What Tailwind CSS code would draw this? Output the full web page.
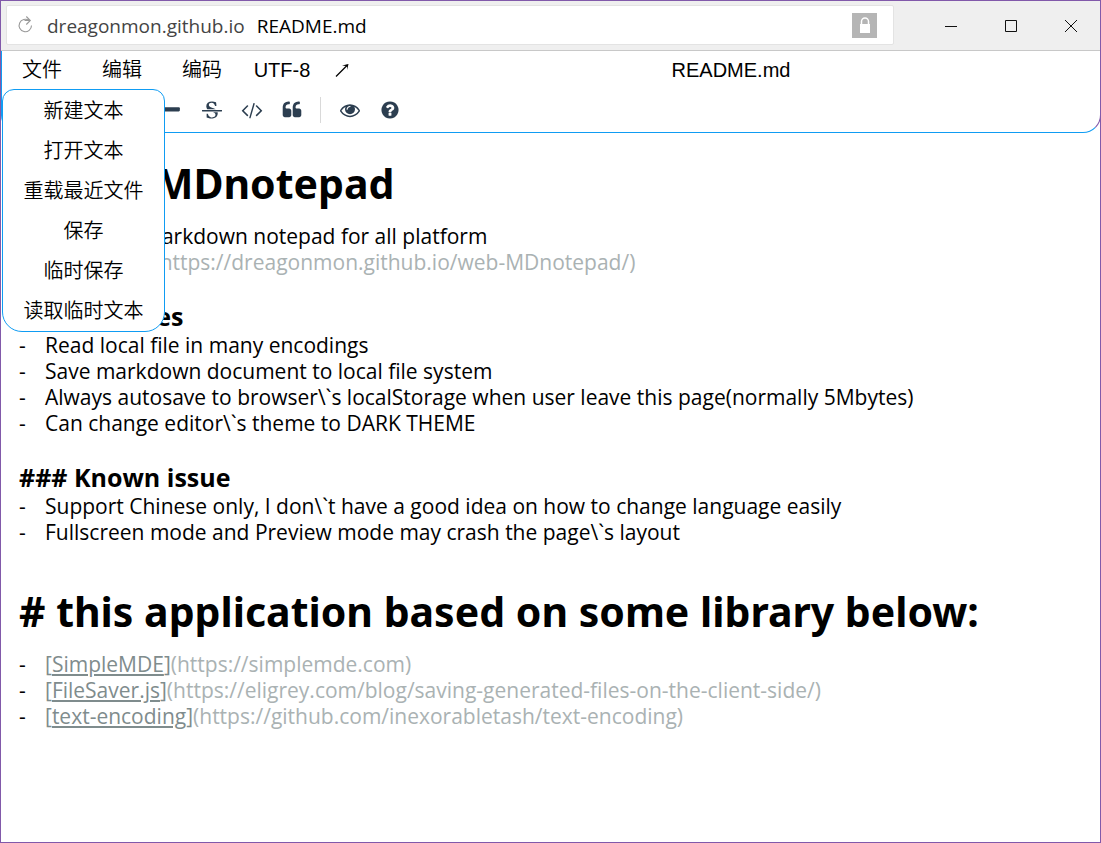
<!DOCTYPE html>
<html lang="zh-CN">
<head>
<meta charset="utf-8">
<meta name="viewport" content="width=device-width, initial-scale=1">
<title>README.md</title>
<script src="https://cdn.jsdelivr.net/npm/@tailwindcss/browser@4"></script>
</head>
<body class="flex min-h-screen flex-col border border-[#8159aa] bg-white font-['Open_Sans','Noto_Sans_CJK_SC',sans-serif] text-black">

<header class="flex h-[50px] shrink-0 items-start border-b border-[#c8c8c8] bg-[#efefef]">
  <div class="ml-[5px] mt-1 flex h-10 flex-1 items-center rounded-xs border border-[#e3e3e3] bg-white pl-2.5 pr-4">
    <button aria-label="刷新" class="mr-3">
      <svg class="block size-[18px]" viewBox="0 0 18 18" fill="none" stroke="#999" stroke-width="1.1"><path d="M14.500 9.500a6.200 6.200 0 1 1-2.500-5H7.500M9.300.5l4 4-4 4"/></svg>
    </button>
    <span class="pt-0.5 text-[19px] leading-6 text-[#444]">dreagonmon.github.io</span>
    <span class="ml-3 pt-0.5 text-[19px] leading-6">README.md</span>
    <button aria-label="安全连接" class="ml-auto flex size-[25px] items-center justify-center bg-[#b5b5b5]">
      <svg class="block h-4 w-3" viewBox="0 0 12 16"><path d="M2.500 8V4.500a3.500 3.500 0 0 1 7 0V8" fill="none" stroke="#fff" stroke-width="1.500"/><path d="M1 7h10v9H1z" fill="#fff"/></svg>
    </button>
  </div>
  <div class="-mr-px ml-[27px] flex">
    <button aria-label="最小化" class="flex h-[49px] w-[60px] items-center justify-center"><svg class="block size-3" viewBox="0 0 12 12" stroke="#111"><path d="M0 6.500h12"/></svg></button>
    <button aria-label="最大化" class="flex h-[49px] w-[60px] items-center justify-center"><svg class="block size-3" viewBox="0 0 12 12" fill="none" stroke="#111"><path d="M.5.5h11v11H.5z"/></svg></button>
    <button aria-label="关闭" class="flex h-[49px] w-[60px] items-center justify-center"><svg class="block size-3" viewBox="0 0 12 12" stroke="#111"><path d="M0 0l12 12M12 0L0 12"/></svg></button>
  </div>
</header>

<div class="relative -mr-px shrink-0 rounded-b-[18px] border-x border-b border-[#0f9cf3] border-r-[#8159aa]">
  <nav class="flex h-[39px] items-center pb-0.5 font-['Liberation_Sans','Noto_Sans_CJK_SC',sans-serif] text-[20px] leading-6">
    <button class="w-20 font-[350]" aria-expanded="true">文件</button>
    <button class="w-20 font-[350]">编辑</button>
    <button class="w-20 font-[350]">编码</button>
    <button class="w-20">UTF-8</button>
    <button class="flex w-10 justify-center" aria-label="全屏"><svg class="block size-3.5" viewBox="0 0 14 14" fill="none" stroke="#000" stroke-width="1.2"><path d="M1 13.500L12.500 2"/><path d="M7 2.500L13.500 1l-1.500 6v-3.500l-1-.5z" fill="#000" stroke="none"/></svg></button>
    <div class="flex-1 text-center">README.md</div>
  </nav>
  <div class="flex h-[42px] items-center pb-0.5 pl-[150px] text-[#2c3e50]">
    <button class="flex w-10 justify-center" aria-label="分隔线"><svg class="block size-5" viewBox="0 0 1792 1792" fill="currentColor"><path d="M1600 736v192q0 40-28 68t-68 28h-1216q-40 0-68-28t-28-68v-192q0-40 28-68t68-28h1216q40 0 68 28t28 68z"/></svg></button>
    <button class="flex w-10 justify-center" aria-label="删除线"><svg class="block size-5" viewBox="0 0 1792 1792" fill="currentColor"><path d="M1760 896q14 0 23 9t9 23v64q0 14-9 23t-23 9h-1728q-14 0-23-9t-9-23v-64q0-14 9-23t23-9h1728zm-1277-64q-28-35-51-80-48-97-48-188 0-181 134-309 133-127 393-127 50 0 167 19 66 12 177 48 10 38 21 118 14 123 14 183 0 18-5 45l-12 3-84-6-14-2q-50-149-103-205-88-91-210-91-114 0-182 59-67 58-67 146 0 73 66 140t279 129q69 20 173 66 58 28 95 52h-743zm507 256h411q7 39 7 92 0 111-41 212-23 55-71 104-37 35-109 81-80 48-153 66-80 21-203 21-114 0-195-23l-140-40q-57-16-72-28-8-8-8-22v-13q0-108-2-156-1-30 0-68l2-37v-44l102-2q15 34 30 71t22.500 56 12.500 27q35 57 80 94 43 36 105 57 59 22 132 22 64 0 139-27 77-26 122-86 47-61 47-129 0-84-81-157-34-29-137-71z"/></svg></button>
    <button class="flex w-10 justify-center" aria-label="代码"><svg class="block size-5 overflow-visible" viewBox="0 0 1792 1792" fill="currentColor"><path d="M553 1399l-50 50q-10 10-23 10t-23-10l-466-466q-10-10-10-23t10-23l466-466q10-10 23-10t23 10l50 50q10 10 10 23t-10 23l-393 393 393 393q10 10 10 23t-10 23zm591-1067l-373 1291q-4 13-15.500 19.500t-23.500 2.500l-62-17q-13-4-19.500-15.500t-2.500-24.500l373-1291q4-13 15.500-19.500t23.500-2.500l62 17q13 4 19.500 15.500t2.500 24.500zm657 651l-466 466q-10 10-23 10t-23-10l-50-50q-10-10-10-23t10-23l393-393-393-393q-10-10-10-23t10-23l50-50q10-10 23-10t23 10l466 466q10 10 10 23t-10 23z"/></svg></button>
    <button class="flex w-10 justify-center" aria-label="引用"><svg class="block size-5" viewBox="0 0 1792 1792" fill="currentColor"><path d="M832 960v384q0 80-56 136t-136 56h-384q-80 0-136-56t-56-136v-704q0-104 40.500-198.500t109.500-163.500 163.500-109.500 198.500-40.500h64q26 0 45 19t19 45v128q0 26-19 45t-45 19h-64q-106 0-181 75t-75 181v32q0 40 28 68t68 28h224q80 0 136 56t56 136zm896 0v384q0 80-56 136t-136 56h-384q-80 0-136-56t-56-136v-704q0-104 40.500-198.500t109.500-163.500 163.500-109.500 198.500-40.500h64q26 0 45 19t19 45v128q0 26-19 45t-45 19h-64q-106 0-181 75t-75 181v32q0 40 28 68t68 28h224q80 0 136 56t56 136z"/></svg></button>
    <span class="ml-2 mr-[9px] h-[26px] w-px bg-[#d9d9d9]"></span>
    <button class="flex w-10 justify-center" aria-label="预览"><svg class="block size-5" viewBox="0 0 1792 1792" fill="currentColor"><path d="M1664 960q-152-236-381-353 61 104 61 225 0 185-131.500 316.500t-316.500 131.500-316.500-131.500-131.500-316.500q0-121 61-225-229 117-381 353 133 205 333.500 326.500t434.500 121.500 434.500-121.500 333.500-326.500zm-720-384q0-20-14-34t-34-14q-125 0-214.500 89.500t-89.500 214.500q0 20 14 34t34 14 34-14 14-34q0-86 61-147t147-61q20 0 34-14t14-34zm848 384q0 34-20 69-140 230-376.500 368.500t-499.500 138.500-499.500-139-376.500-368q-20-35-20-69t20-69q140-229 376.500-368t499.500-139 499.500 139 376.500 368q20 35 20 69z"/></svg></button>
    <button class="flex w-10 justify-center" aria-label="帮助"><svg class="block size-5" viewBox="0 0 1792 1792" fill="currentColor"><path d="M1024 1376v-192q0-14-9-23t-23-9h-192q-14 0-23 9t-9 23v192q0 14 9 23t23 9h192q14 0 23-9t9-23zm256-672q0-88-55.500-163t-138.500-116-170-41q-243 0-371 213-15 24 8 42l132 100q7 6 19 6 16 0 25-12 53-68 86-92 34-24 86-24 48 0 85.500 26t37.500 59q0 38-20 61t-68 45q-63 28-115.500 86.500t-52.500 125.500v36q0 14 9 23t23 9h192q14 0 23-9t9-23q0-19 21.500-49.500t54.500-49.500q32-18 49-28.500t46-35 44.500-48 28-60.500 12.500-81zm384 192q0 209-103 385.500t-279.500 279.500-385.500 103-385.500-103-279.500-279.500-103-385.500 103-385.500 279.500-279.500 385.500-103 385.500 103 279.500 279.500 103 385.500z"/></svg></button>
  </div>
  <!-- 文件菜单 -->
  <div role="menu" class="absolute left-0 top-[38px] z-10 flex w-[163px] flex-col rounded-t-[12px] rounded-b-[20px] border border-[#0f9cf3] bg-white pt-px font-['Liberation_Sans','Noto_Sans_CJK_SC',sans-serif] text-[20px] leading-6 font-[350]">
    <button role="menuitem" class="h-10">新建文本</button>
    <button role="menuitem" class="h-10">打开文本</button>
    <button role="menuitem" class="h-10">重载最近文件</button>
    <button role="menuitem" class="h-10">保存</button>
    <button role="menuitem" class="h-10">临时保存</button>
    <button role="menuitem" class="h-10">读取临时文本</button>
  </div>
</div>

<main class="flex-1 px-[18px] pt-[10px] text-[21px] leading-[26px]">
  <h1 class="font-['Noto_Sans',sans-serif] text-[41px] leading-[80px] font-bold"># web-MDnotepad</h1>
  <p>Simple, web markdown notepad for all platform</p>
  <p class="text-[#aab2b3]"><a href="#" class="text-[#7f8c8d]">[<span class="underline">Try it online!</span>]</a>(https://dreagonmon.github.io/web-MDnotepad/)</p>
  <h3 class="mt-[26px] text-[25px] leading-[31px] font-bold">### Features</h3>
  <ul>
    <li class="flex"><span class="w-[26px]">-</span>Read local file in many encodings</li>
    <li class="flex"><span class="w-[26px]">-</span>Save markdown document to local file system</li>
    <li class="flex"><span class="w-[26px]">-</span>Always autosave to browser\`s localStorage when user leave this page(normally 5Mbytes)</li>
    <li class="flex"><span class="w-[26px]">-</span>Can change editor\`s theme to DARK THEME</li>
  </ul>
  <h3 class="mt-[26px] text-[25px] leading-[31px] font-bold">### Known issue</h3>
  <ul>
    <li class="flex"><span class="w-[26px]">-</span>Support Chinese only, I don\`t have a good idea on how to change language easily</li>
    <li class="flex"><span class="w-[26px]">-</span>Fullscreen mode and Preview mode may crash the page\`s layout</li>
  </ul>
  <h1 class="mt-[26px] font-['Noto_Sans',sans-serif] text-[41px] leading-[80px] font-bold"># this application based on some library below:</h1>
  <ul class="text-[#aab2b3]">
    <li class="flex"><span class="w-[26px] text-black">-</span><a href="https://simplemde.com" class="text-[#7f8c8d]">[<span class="underline">SimpleMDE</span>]</a>(https://simplemde.com)</li>
    <li class="flex"><span class="w-[26px] text-black">-</span><a href="https://eligrey.com/blog/saving-generated-files-on-the-client-side/" class="text-[#7f8c8d]">[<span class="underline">FileSaver.js</span>]</a>(https://eligrey.com/blog/saving-generated-files-on-the-client-side/)</li>
    <li class="flex"><span class="w-[26px] text-black">-</span><a href="https://github.com/inexorabletash/text-encoding" class="text-[#7f8c8d]">[<span class="underline">text-encoding</span>]</a>(https://github.com/inexorabletash/text-encoding)</li>
  </ul>
</main>
</body>
</html>
